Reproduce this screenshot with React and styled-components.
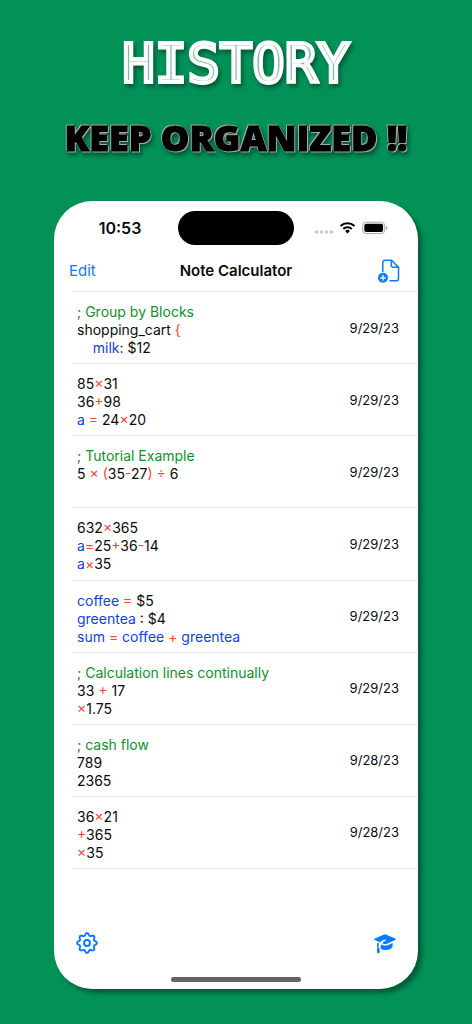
import React from "react";
import styled, { createGlobalStyle } from "styled-components";

const GlobalStyle = createGlobalStyle`
  *, *::before, *::after { box-sizing: border-box; }
  body { margin: 0; background: #029258; }
  button { font: inherit; }
`;

const Page = styled.main`
  min-height: 100vh;
  padding: 32px 54px;
  background: #029258;
  color: #0b0b0b;
  font-family: Inter, "Liberation Sans", sans-serif;
`;

const Headline = styled.h1`
  margin: 0 -40px;
  color: #7dbda2;
  font: 400 54px/64px "DejaVu Sans Mono", monospace;
  text-align: center;
  white-space: nowrap;
  -webkit-text-stroke: 4px #fff;
  filter: drop-shadow(2px 3px 2px rgba(0, 0, 0, 0.4));
`;

const Tagline = styled.h2`
  margin: 20px -40px 0;
  color: #000;
  font: 800 36px/44px "Open Sans", sans-serif;
  text-align: center;
  white-space: nowrap;
  -webkit-text-stroke: 1px #000;
  paint-order: stroke fill;
  filter: drop-shadow(1px 1px 0 #aaa) drop-shadow(-1px -1px 0 #aaa)
    drop-shadow(2px 3px 2px rgba(0, 0, 0, 0.4));
`;

const Phone = styled.section`
  display: flex;
  flex-direction: column;
  min-height: 788px;
  margin-top: 41px;
  background: #fff;
  border-radius: 38px;
  box-shadow: 4px 4px 4px rgba(0, 40, 20, 0.5);
`;

const StatusBar = styled.div`
  display: grid;
  grid-template-columns: 1fr 116px 1fr;
  align-items: center;
  height: 54px;
`;

const Clock = styled.time`
  padding-left: 8px;
  font-size: 16px;
  font-weight: 600;
  text-align: center;
`;

const Island = styled.div`
  height: 34px;
  border-radius: 17px;
  background: #000;
`;

const StatusIcons = styled.div`
  display: flex;
  align-items: center;
  padding-left: 20px;
`;

const NavBar = styled.header`
  display: grid;
  grid-template-columns: 1fr auto 1fr;
  align-items: center;
  height: 36px;
  padding: 0 18px 4px;
`;

const NavTitle = styled.h3`
  margin: 0;
  font-size: 15px;
  font-weight: 600;
  line-height: 20px;
`;

const ToolButton = styled.button`
  justify-self: ${(p) => (p.$end ? "end" : "start")};
  display: flex;
  padding: 0;
  border: 0;
  background: none;
  color: #0a7aff;
  font-size: 15px;
  line-height: 20px;
  cursor: pointer;
`;

const EditButton = styled(ToolButton)`
  margin-left: -3px;
`;

const NoteList = styled.ul`
  display: grid;
  grid-auto-rows: 1fr;
  min-height: 578px;
  margin: 0 0 0 18px;
  padding: 0;
  border-top: 1px solid #e9e9eb;
  list-style: none;
`;

const NoteRow = styled.li`
  display: flex;
  align-items: center;
  justify-content: space-between;
  padding: 0 19px 0 5px;
  border-bottom: 1px solid #e9e9eb;
`;

const Preview = styled.div`
  min-height: 54px;
  padding-top: 5px;
  font-size: 14px;
  line-height: 18px;
  white-space: pre;
`;

const tokenColors = { c: "#0c9328", o: "#fb4437", v: "#1240e8", n: "inherit" };

const Token = styled.span`
  color: ${(p) => tokenColors[p.$kind]};
`;

const DateLabel = styled.time`
  font-size: 13px;
`;

const Toolbar = styled.footer`
  display: flex;
  align-items: center;
  justify-content: space-between;
  margin-top: auto;
  padding: 0 22px 23px;
`;

const HomeIndicator = styled.div`
  align-self: center;
  width: 130px;
  height: 5px;
  margin-bottom: 7px;
  border-radius: 3px;
  background: #646464;
`;

const notes = [
  { date: "9/29/23", lines: [[["c", "; Group by Blocks"]], [["n", "shopping_cart "], ["o", "{"]], [["v", "    milk"], ["n", ": $12"]]] },
  { date: "9/29/23", lines: [[["n", "85"], ["o", "×"], ["n", "31"]], [["n", "36"], ["o", "+"], ["n", "98"]], [["v", "a "], ["o", "="], ["n", " 24"], ["o", "×"], ["n", "20"]]] },
  { date: "9/29/23", lines: [[["c", "; Tutorial Example"]], [["n", "5 "], ["o", "× ("], ["n", "35"], ["o", "-"], ["n", "27"], ["o", ") ÷"], ["n", " 6"]], [["n", " "]]] },
  { date: "9/29/23", lines: [[["n", "632"], ["o", "×"], ["n", "365"]], [["v", "a"], ["o", "="], ["n", "25"], ["o", "+"], ["n", "36"], ["o", "-"], ["n", "14"]], [["v", "a"], ["o", "×"], ["n", "35"]]] },
  { date: "9/29/23", lines: [[["v", "coffee "], ["o", "="], ["n", " $5"]], [["v", "greentea"], ["n", " : $4"]], [["v", "sum "], ["o", "="], ["v", " coffee "], ["o", "+"], ["v", " greentea"]]] },
  { date: "9/29/23", lines: [[["c", "; Calculation lines continually"]], [["n", "33 "], ["o", "+"], ["n", " 17"]], [["o", "×"], ["n", "1.75"]]] },
  { date: "9/28/23", lines: [[["c", "; cash flow"]], [["n", "789"]], [["n", "2365"]]] },
  { date: "9/28/23", lines: [[["n", "36"], ["o", "×"], ["n", "21"]], [["o", "+"], ["n", "365"]], [["o", "×"], ["n", "35"]]] },
];

const StatusGlyphs = () => (
  <svg width="74" height="16" viewBox="0 0 74 16" aria-hidden="true">
    <g fill="#c9c9c9">
      <circle cx="2.5" cy="12" r="1.8" />
      <circle cx="7.5" cy="12" r="1.8" />
      <circle cx="12.5" cy="12" r="1.8" />
      <circle cx="17.5" cy="12" r="1.8" />
    </g>
    <g fill="none" stroke="#000" strokeWidth="2.1">
      <path d="M26.5 6a10.2 10.2 0 0 1 14 0" />
      <path d="M29.3 9a6.1 6.1 0 0 1 8.4 0" />
    </g>
    <path d="M31.1 10.9a3.6 3.6 0 0 1 4.8 0L33.5 13.4z" fill="#000" />
    <rect x="48.7" y="2.2" width="22" height="11.4" rx="3.5" fill="none" stroke="#a5a5a5" />
    <rect x="50.3" y="3.8" width="18.8" height="8.2" rx="2" fill="#000" />
    <path d="M72 6v4c1-.3 1.500-1 1.500-2s-.5-1.700-1.500-2z" fill="#a5a5a5" />
  </svg>
);

const NewNoteIcon = () => (
  <svg width="22" height="24" viewBox="0 0 22 24" fill="none" stroke="currentColor" strokeWidth="1.5" aria-hidden="true">
    <path d="M4.800 13V3.500a2.200 2.200 0 0 1 2.200-2.200h6.500L20.500 8.300v11.500a2 2 0 0 1-2 2H11.500M13.300 1.500V6.300a2 2 0 0 0 2 2h5" strokeLinejoin="round" />
    <circle cx="5" cy="18.800" r="5" fill="currentColor" stroke="none" />
    <path d="M5 15.900v5.800M2.100 18.800h5.800" stroke="#fff" strokeWidth="1.300" />
  </svg>
);

/* Eight-lobed outline of the gear, around the middle of a 24-unit box. */
const gearOutline = Array.from({ length: 96 }, (_, i) => {
  const angle = (i / 96) * Math.PI * 2;
  const radius = 9.5 + 1.3 * Math.cos(8 * angle);
  return `${(12 + radius * Math.cos(angle)).toFixed(2)},${(12 + radius * Math.sin(angle)).toFixed(2)}`;
}).join(" ");

const GearIcon = () => (
  <svg width="22" height="22" viewBox="0 0 24 24" fill="none" stroke="currentColor" strokeWidth="2.1" strokeLinejoin="round" aria-hidden="true">
    <polygon points={gearOutline} />
    <circle cx="12" cy="12" r="3.200" />
  </svg>
);

const CapIcon = () => (
  <svg width="22" height="22" viewBox="0 -2 22 22" fill="currentColor" aria-hidden="true">
    <path d="M10.300.4Q11 .1 11.700.4L21.200 4.600Q22.300 5.300 21.200 6L13 9.800Q11.200 10.500 9.500 9.800L8.400 9.300Q9 7.700 11.500 6.800 12.300 6.200 11.600 5.600 7.500 6 6 8.400L.8 6Q-.3 5.300.8 4.600Z" />
    <path d="M7.300 10.500 9 11.200Q11.200 12 13.500 11.200L18.600 9V12.800Q16.500 16 11.500 16 8.500 16 6.600 14.800 6.400 12 7.300 10.500Z" />
    <path d="M3.300 8.600 5 9.400Q4.400 11.200 4.600 13.200 6 14.500 5.800 18.600L3.200 19.500Q2.600 15.500 3.400 13.500 2.800 11 3.300 8.600Z" />
  </svg>
);

export default function App() {
  return (
    <>
      <GlobalStyle />
      <Page>
        <Headline>HISTORY</Headline>
        <Tagline>KEEP ORGANIZED !!</Tagline>
        <Phone>
          <StatusBar>
            <Clock>10:53</Clock>
            <Island />
            <StatusIcons><StatusGlyphs /></StatusIcons>
          </StatusBar>
          <NavBar>
            <EditButton type="button">Edit</EditButton>
            <NavTitle>Note Calculator</NavTitle>
            <ToolButton type="button" $end aria-label="New note"><NewNoteIcon /></ToolButton>
          </NavBar>
          <NoteList>
            {notes.map((note, i) => (
              <NoteRow key={i}>
                <Preview>
                  {note.lines.map((line, j) => (
                    <div key={j}>
                      {line.map(([kind, text], k) => <Token key={k} $kind={kind}>{text}</Token>)}
                    </div>
                  ))}
                </Preview>
                <DateLabel>{note.date}</DateLabel>
              </NoteRow>
            ))}
          </NoteList>
          <Toolbar>
            <ToolButton type="button" aria-label="Settings"><GearIcon /></ToolButton>
            <ToolButton type="button" aria-label="Tutorials"><CapIcon /></ToolButton>
          </Toolbar>
          <HomeIndicator />
        </Phone>
      </Page>
    </>
  );
}
